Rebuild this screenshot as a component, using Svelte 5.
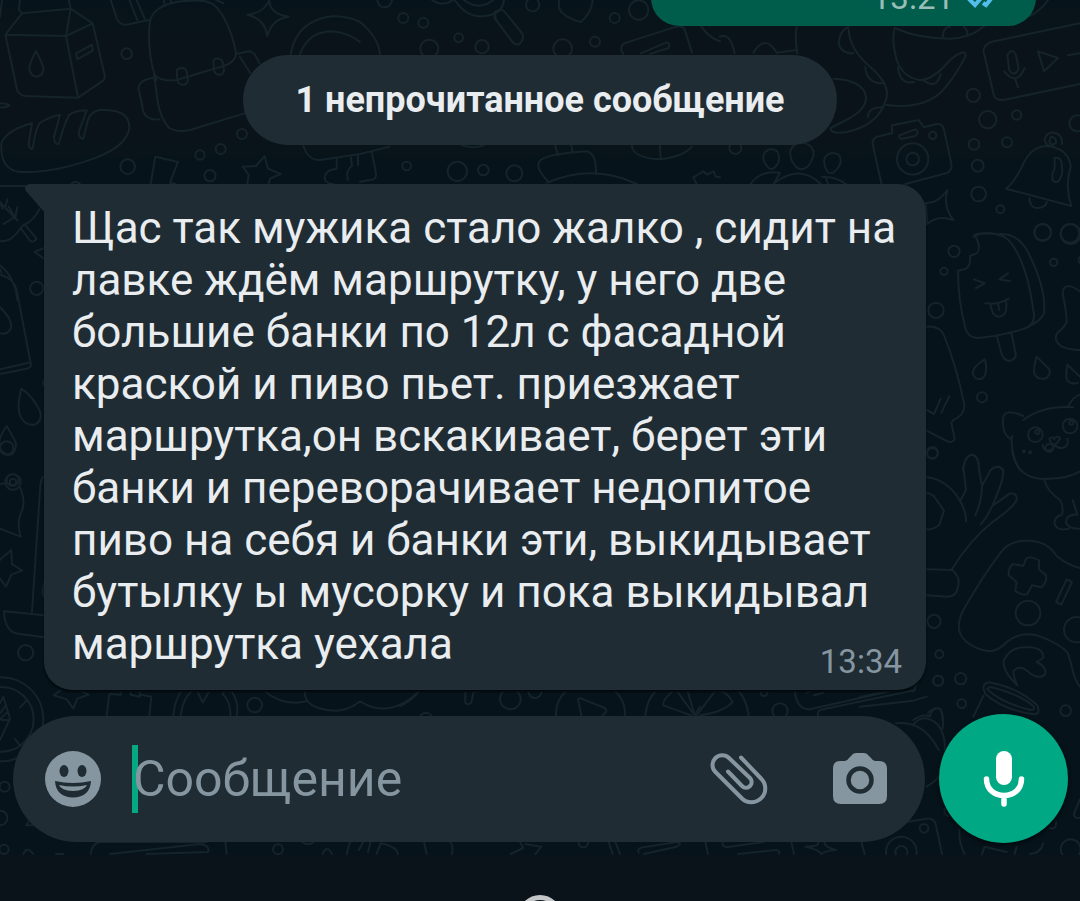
<script>
  let draft = $state('');

  const message = [
    'Щас так мужика стало жалко , сидит на',
    'лавке ждём маршрутку, у него две',
    'большие банки по 12л с фасадной',
    'краской и пиво пьет. приезжает',
    'маршрутка,он вскакивает, берет эти',
    'банки и переворачивает недопитое',
    'пиво на себя и банки эти, выкидывает',
    'бутылку ы мусорку и пока выкидывал',
    'маршрутка уехала'
  ];

  // The last line shares its row with the time stamp.
  const body = message.slice(0, -1).join('\n');
  const lastLine = message[message.length - 1];

  // Wallpaper doodles, drawn at triple size around an origin.
  // Circles are [cx, cy, r].
  const doodles = [
    {
      x: 0, y: 0,
      circles: [[380, 161, 16], [383, 500, 22], [630, 527, 17], [600, 465, 14], [662, 447, 15], [726, 402, 15]],
      paths: [
        'M0 50L6 0M60 0L56 30L66 40L212 26L206 0M66 40L16 104L198 108L212 26L278 70L198 108L234 292M16 104L52 272Q58 286 76 288L234 293L306 244Q316 238 314 226L278 70M108 154Q88 190 88 206Q92 230 110 230Q132 226 130 204Q126 186 108 154M228 160L276 134L278 152L232 178Z',
        'M332 0L350 54Q358 76 380 74L446 60M388 0L412 60M410 0L434 56M492 0L494 18M512 0L514 10',
        'M470 240C446 180 444 110 450 62C462 20 510 4 570 2C640 -4 652 22 670 50Q700 104 708 160Q708 186 670 198L530 240Q480 246 462 222L470 280Q476 350 508 384Q530 398 570 390L740 338M460 234Q414 240 416 268L430 334Q440 362 478 358M708 162L746 154Q764 154 778 190M720 170L750 218M640 -4L670 10',
        'M530 210Q534 204 546 204Q558 204 560 216L564 240Q560 256 546 254Q536 254 532 240ZM640 182Q644 174 656 176Q668 178 670 194L672 212Q668 226 656 224Q644 222 642 208Z',
        'M808 0Q808 42 866 50Q816 56 802 108Q794 56 742 44Q792 40 808 0M872 162Q890 60 1000 48Q1050 50 1080 66M900 162Q926 94 996 94Q1044 98 1080 126',
        'M0 310Q20 310 28 316Q16 324 0 322M4 430Q20 390 96 370L86 430Q88 450 98 446Q110 370 124 366Q150 350 180 344L162 410Q162 434 176 432Q190 380 206 346Q228 330 260 332L236 396Q236 416 250 416L264 360Q272 334 300 330Q390 326 388 384Q380 440 280 476Q160 520 60 516Q0 510 4 430',
        'M452 552L466 470L534 486L510 548L526 552M794 468L804 506L842 522L810 536L806 552M742 552L746 524L728 500L768 498L794 468M910 438Q926 482 960 480L1080 462M1010 478L1010 506Q974 510 974 534Q976 552 1000 552M1052 468L1056 498Q1036 510 1044 540M1074 466L1074 494',
        'M0 558L76 558M214 552Q226 538 240 552M0 606L52 662L26 620M22 598L16 622M0 610L8 626M52 622L46 650L10 672M118 628Q102 660 74 674L110 716Q100 730 90 722L62 684L72 674M62 684Q30 732 0 722M132 744L104 756L132 776M0 796Q44 830 52 900'
      ]
    },
    {
      x: 360, y: 0,
      circles: [[74, 0, 22], [130, 54, 15], [190, 68, 15], [296, 113, 13], [208, 146, 27], [366, 140, 20], [518, 14, 20], [764, 54, 15], [836, 30, 29], [608, 146, 28], [705, 125, 15], [140, 498, 13], [292, 514, 29], [370, 510, 16], [463, 520, 24]],
      paths: [
        'M0 66Q54 110 60 162M216 0Q246 22 280 0M284 0Q320 54 370 48Q426 46 432 0M312 0Q356 34 400 0M408 60L404 36Q424 20 438 40L488 102Q492 120 478 132Q464 136 456 124L402 52',
        'M598 0Q592 22 606 38Q630 58 662 66Q696 38 698 0M790 162Q776 142 792 130L930 86Q966 72 974 88L996 158M842 160L918 128Q932 126 926 144L870 162M1024 80Q1050 116 1080 124',
        'M0 462L88 440M36 458L48 520Q50 540 30 540L0 545M308 436Q340 448 370 436M586 438L594 466M634 438L638 456M566 546Q520 500 542 480Q564 462 680 454Q708 460 708 516M562 548Q700 490 830 552M816 438Q820 474 900 478Q970 470 996 440M900 438L902 478M1010 552L1000 532L1030 514L1042 524L1060 514L1068 530L1080 532'
      ]
    },
    {
      x: 720, y: 0,
      circles: [[760, 286, 20], [803, 359, 26], [890, 345, 14], [762, 433, 16], [861, 427, 15], [773, 497, 18], [776, 582, 22], [841, 628, 12], [968, 696, 25], [1050, 700, 28], [1072, 370, 24], [46, 444, 18], [578, 477, 47], [578, 477, 19], [638, 406, 11]],
      paths: [
        'M0 110Q30 96 44 160M100 158Q136 100 170 158L232 150M230 82Q224 110 232 160M386 82Q360 88 356 130Q362 160 400 160M386 90Q390 150 450 200Q520 260 494 310Q470 376 380 396Q330 404 332 384L390 354Q440 326 438 290Q430 240 340 236M436 202Q440 250 488 250M444 352Q444 320 490 322',
        'M524 84Q596 116 690 116Q750 114 790 80Q834 54 850 30M524 84Q514 120 530 180Q550 234 600 240Q640 240 690 180Q740 140 736 170Q700 240 660 280Q600 330 496 314M534 202Q540 256 582 246M612 242Q650 270 662 222M668 112Q670 80 690 80M732 80Q744 92 742 104M930 48Q964 30 984 0',
        'M1080 70L830 122Q780 130 794 168L820 280Q824 302 850 300L1080 252M862 166Q876 140 888 166L896 206Q886 232 868 212ZM852 214Q890 260 914 204M886 238L894 262M954 154L1014 174L972 214ZM1044 166L1080 160',
        'M484 550L458 432Q456 412 480 408L516 400L516 376L596 360L612 382L650 372Q668 370 672 390L694 490Q698 512 678 520L556 552M538 406L586 388Q600 396 586 408L548 416Q536 418 538 406',
        'M146 504Q124 480 132 460Q150 438 172 454Q186 486 162 504Q154 510 146 504M232 504Q206 480 212 450Q224 424 252 428Q286 440 280 468Q262 520 232 504M324 516Q308 494 314 474Q330 450 356 464Q374 490 340 518Q332 522 324 516M92 552Q120 510 180 518L162 550M162 550Q240 490 302 552M306 530Q350 530 378 552M316 530L324 552',
        'M608 608Q650 616 682 570Q668 620 700 660Q652 644 622 672L618 612M1002 440Q976 440 974 418Q980 396 1002 398Q1028 402 1026 432M858 566Q880 550 906 500Q930 440 980 438Q1046 444 1052 500Q1034 560 1054 618ZM994 410Q1010 412 1008 428Q1000 438 990 430Q986 418 994 410M1004 474Q1030 466 1026 520Q1018 556 998 542Q994 520 1004 506ZM928 594Q930 626 956 624Q980 620 980 606M760 710Q800 690 850 710'
      ]
    },
    {
      x: 860, y: 220,
      circles: [[282, 94, 17], [252, 154, 11], [228, 271, 23], [548, 38, 25], [632, 42, 30], [581, 127, 11], [668, 120, 12], [366, 532, 15], [217, 698, 17], [526, 644, 22], [630, 618, 22], [532, 636, 6], [634, 608, 6], [492, 694, 3], [510, 697, 3]],
      paths: [
        'M344 44Q366 86 350 100L330 108Q334 140 314 148L294 152Q294 240 316 324Q324 352 350 354Q420 350 492 326Q530 316 520 270Q500 130 454 70Q430 36 380 40Q356 40 344 44M420 42Q476 40 506 100Q560 210 552 280Q542 304 500 322M342 178L374 190L348 204M444 160L418 178L450 184M376 250Q410 256 446 236M392 254Q396 292 420 290Q444 284 438 244M414 250L418 270M410 346L424 400Q432 424 452 422Q472 414 466 396L454 338',
        'M374 418Q338 440 338 460Q344 482 366 476Q384 464 376 422M530 410Q518 450 524 464Q536 482 560 474Q574 460 568 448ZM622 434Q616 470 622 482Q636 496 654 488M622 434L660 470M660 214Q610 180 608 220Q620 280 620 306Q610 326 594 336Q576 360 606 380Q630 390 660 390',
        'M200 320Q240 318 252 346Q290 440 312 550Q318 584 280 600L274 608L284 656Q280 670 262 664L200 632M200 570L222 582L242 536M268 528L244 578M490 600Q550 556 640 562M626 556Q640 530 660 524M490 588Q440 564 430 590Q424 640 450 656M456 648Q450 700 480 750M568 656Q580 646 582 658Q594 644 600 656Q592 670 584 674Q570 670 568 656M584 674Q578 692 562 692Q550 690 548 674M584 674Q592 686 606 684Q628 680 622 656M308 750Q316 704 338 704Q356 712 358 750M392 750Q412 730 430 750'
      ]
    },
    {
      x: 860, y: 450,
      circles: [[217, 10, 16], [222, 514, 20], [504, 489, 37], [650, 539, 38], [238, 613, 12], [235, 692, 15], [302, 686, 17], [305, 761, 13], [617, 782, 16], [568, -6, 12]],
      paths: [
        'M456 0Q470 94 570 86Q630 84 660 64M552 86Q560 124 600 150Q612 170 606 194Q580 200 584 224Q594 244 626 236M638 150L652 194Q620 192 618 216Q624 238 660 236',
        'M200 82Q250 86 290 136Q320 180 318 214M302 150L318 120L310 52Q318 12 340 14Q358 22 356 54L366 108Q366 150 346 196M366 108L392 60Q420 38 430 66Q430 90 404 150Q390 190 362 224M402 164L450 130Q476 130 468 154Q450 180 400 214Q330 270 274 360M200 128L220 136L252 182L238 224Q222 240 200 238M200 358L276 360Q302 380 294 410Q290 440 264 440L200 436',
        'M660 354Q620 344 590 318Q560 270 500 272Q450 270 420 310Q360 390 308 484Q280 544 320 576Q350 600 390 604Q420 600 440 576Q480 544 530 556Q600 580 624 610Q634 640 640 670Q650 700 660 710M498 326Q510 316 538 332L536 358L558 376Q562 396 544 412L516 406L502 432Q486 438 466 422L470 396L446 376Q444 356 458 342L490 348ZM620 388L636 396L604 464L588 456Z',
        'M472 706Q424 660 432 630Q450 590 500 592Q550 590 550 624L530 636Q560 650 556 672Q540 690 510 670Q480 640 460 664Q460 680 472 706M370 714Q370 696 394 698Q480 716 532 766Q544 796 518 792Q430 780 376 732ZM382 718Q386 708 404 714Q480 734 522 770Q526 784 504 778Q420 756 382 718M370 738L340 800M200 740L160 752L0 770M0 742L160 704Q170 710 160 724M160 810Q190 790 210 800Q216 770 240 776Q250 790 248 810'
      ]
    },
    {
      x: 0, y: 180,
      circles: [[110, 325, 20], [38, 900, 18]],
      paths: ['M0 268Q6 276 4 286Q40 294 50 330L92 550Q96 562 80 566L0 582M0 568L86 548M0 382Q40 420 32 446Q20 466 0 460M64 626Q50 680 60 706Q74 738 104 734Q128 724 120 694Q100 650 64 626M20 738Q-10 780 0 806Q16 830 38 822Q54 800 44 780ZM132 600Q126 608 132 618']
    },
    {
      x: 0, y: 450,
      circles: [[20, -6, 20], [39, 96, 23], [39, 96, 10], [77, 608, 23]],
      paths: ['M0 102L20 100M60 112Q80 160 62 190Q50 220 62 260L0 236M34 300L36 342L66 362L34 374L18 410L0 386M0 330L10 320L34 300M132 78Q120 90 120 120L96 486M132 400Q124 430 132 440M12 484L132 496M12 484Q14 550 60 552L132 562']
    },
    {
      x: 0, y: 670,
      circles: [[4, 148, 97], [4, 148, 126], [764, 105, 22], [14, 350, 15], [834, 538, 15], [0, 444, 22], [12, 538, 14]],
      paths: [
        'M0 100L10 80L30 146L0 210M0 130L16 108M0 148L24 124M6 150L28 150M60 112L80 92M44 206L60 226M182 60L162 76L200 88L220 116L232 86L266 74L236 60M320 136L328 72L362 74L362 60M392 60L392 74L420 80L420 60M424 74L454 80L448 136M520 136Q524 90 546 60M542 136Q550 80 580 60M592 64L608 98L626 66M692 136Q690 90 668 72Q674 56 696 66Q718 100 710 136M792 62Q850 110 920 94M914 60Q910 120 1010 122Q1050 120 1080 94Q1170 150 1258 62',
        'M90 450L78 466L100 466M70 552Q80 526 100 552M272 552Q276 520 300 516L620 516M330 552L600 522Q630 526 624 546L440 552M676 516L680 552M968 552Q980 522 996 552M1040 552L1050 516M1076 540L1090 516M1104 546L1112 516M1130 552L1142 520Q1190 530 1194 552M906 516Q926 530 940 516M168 552L190 552'
      ]
    },
    {
      x: 400, y: 670,
      circles: [[331, 87, 31], [405, 64, 20], [550, 518, 14]],
      paths: ['M0 108Q40 90 60 60M196 62L196 98Q204 108 214 98L220 68L246 60M62 136Q78 120 94 136M468 136Q466 90 502 60M642 60Q680 96 674 136M534 88Q540 82 550 88L614 114Q626 124 608 136M534 88L544 136M736 136Q740 90 770 60M874 136L790 106Q786 90 820 62M830 62L884 136L862 60M884 136L900 110M72 516L80 552M152 516Q160 530 156 552M332 552L370 534L360 516M376 522L424 530L406 552M626 516L638 552M646 516L660 552M716 548Q710 534 730 532L830 516Q850 520 830 530L732 552']
    },
    {
      x: 690, y: 670,
      circles: [[744, 32, 15], [270, 123, 23], [222, 68, 10], [702, 475, 13], [634, 546, 46], [634, 546, 18], [1142, 538, 30]],
      paths: [
        'M20 136L76 62Q110 60 128 96Q100 126 30 136M144 60Q170 90 176 136M314 62Q320 120 360 118L680 46M384 136Q380 120 400 118L676 60M372 76L400 68M350 68L366 62M618 160Q700 150 746 240M670 164Q700 126 744 164Q768 200 764 240M714 130Q730 110 750 116Q762 140 758 176M710 350Q760 320 752 290M764 416Q760 434 776 438',
        'M46 516L54 552M98 516Q94 534 120 530L220 516M144 552L260 540Q272 544 266 552M304 516L312 552M384 516Q390 530 346 530Q390 540 394 552Q406 542 438 540Q400 530 404 516M514 516L524 552M650 456L710 446Q734 444 738 466L756 552M808 478Q806 520 824 552M876 552L884 530L950 546M974 552L980 530M1060 520Q1050 552 1020 552M1080 474Q1100 480 1098 456M1170 388L1152 430Q1150 446 1170 444'
      ]
    }
  ];
</script>

<div class="screen">
  <main class="chat">
    <svg class="wallpaper" width="1080" height="855" viewBox="0 0 1080 855" aria-hidden="true">
      {#each doodles as group}
        <g transform="translate({group.x} {group.y}) scale(0.33333)">
          {#each group.circles as [cx, cy, r]}
            <circle {cx} {cy} {r} />
          {/each}
          {#each group.paths as d}
            <path {d} />
          {/each}
        </g>
      {/each}
    </svg>

    <section class="history">
      <article class="bubble sent">
        <time>13:21</time>
        <svg class="ticks" width="34" height="22" viewBox="0 0 34 22" aria-hidden="true">
          <path d="M1 10L9 18L23 2M17 16L20 18L33 2" />
        </svg>
      </article>

      <div class="unread">1 непрочитанное сообщение</div>

      <article class="bubble received">
        <svg class="tail" width="20" height="30" viewBox="0 0 20 30" aria-hidden="true">
          <path d="M20 0H4Q-2 2 1 7L20 29Z" />
        </svg>
        <p>{body}</p>
        <div class="ending">
          <p>{lastLine}</p>
          <time>13:34</time>
        </div>
      </article>
    </section>

    <form class="composer" onsubmit={(e) => e.preventDefault()}>
      <div class="field">
        <button type="button" class="icon" aria-label="Эмодзи">
          <svg width="56" height="56" viewBox="0 0 56 56">
            <circle cx="28" cy="28" r="28" fill="#8696a0" />
            <ellipse cx="19" cy="20" rx="4.5" ry="6" fill="#1f2c34" />
            <ellipse cx="37" cy="20" rx="4.5" ry="6" fill="#1f2c34" />
            <path d="M10 30Q28 34 46 30Q45 46 28 46.500Q11 46 10 30Z" fill="#1f2c34" />
            <path d="M14 34Q28 37 42 34Q40 39.500 28 40Q16 39.500 14 34Z" fill="#8696a0" />
          </svg>
        </button>
        <div class="entry">
          <span class="caret"></span>
          <input type="text" placeholder="Сообщение" aria-label="Сообщение" bind:value={draft} />
        </div>
        <button type="button" class="icon" aria-label="Прикрепить">
          <svg width="60" height="56" viewBox="0 0 60 56" fill="none" stroke="#8696a0" stroke-width="4" stroke-linecap="round" stroke-linejoin="round">
            <path d="M33 6.500L53 27.500A13.700 13.700 0 0 1 34 47.500L7.500 21A9.500 9.500 0 0 1 21 7L42 27A5.500 5.500 0 0 1 34 35L20 20.500" />
          </svg>
        </button>
        <button type="button" class="icon" aria-label="Камера">
          <svg width="56" height="52" viewBox="0 0 56 52">
            <path d="M8 8H13Q15 8 17 5L19 3Q21 0 24 0H32Q35 0 37 3L39 5Q41 8 43 8H47Q55 8 55 16V43Q55 51 47 51H9Q1 51 1 43V16Q1 8 8 8Z" fill="#8696a0" />
            <circle cx="28" cy="27" r="11.500" fill="none" stroke="#1f2c34" stroke-width="4.500" />
          </svg>
        </button>
      </div>
      <button type="button" class="mic" aria-label="Голосовое сообщение">
        <svg width="42" height="58" viewBox="0 0 42 58">
          <rect x="13" y="1" width="16" height="34" rx="8" fill="#fff" />
          <path d="M3.500 29C3.500 51 38.500 51 38.500 29M21 46V54" fill="none" stroke="#fff" stroke-width="5.500" stroke-linecap="round" />
        </svg>
      </button>
    </form>
  </main>

  <nav class="system">
    <button type="button" class="home" aria-label="Домой"></button>
  </nav>
</div>

<style>
  :global(body) {
    margin: 0;
    background: #0b141a;
  }

  .screen {
    display: flex;
    flex-direction: column;
    height: 100vh;
    overflow: hidden;
    font-family: Roboto, 'Noto Sans', sans-serif;
    color: #e9edef;
  }

  .chat {
    position: relative;
    isolation: isolate;
    flex: 1;
    display: flex;
    flex-direction: column;
    min-height: 0;
    overflow: hidden;
    background: linear-gradient(#07131a, #0b131a 50px, #0b131a 130px, #06131a 170px, #06131a);
  }

  .wallpaper {
    position: absolute;
    inset: 0;
    z-index: -1;
    fill: none;
    stroke: #15232a;
    stroke-width: 6;
    stroke-linecap: round;
    stroke-linejoin: round;
  }

  .history {
    flex: 1;
    min-height: 0;
    display: flex;
    flex-direction: column;
    justify-content: flex-end;
    padding-bottom: 24px;
  }

  .history > * {
    flex: none;
  }

  .bubble {
    border-radius: 28px;
  }

  time {
    font-size: 33px;
    line-height: 40px;
    color: #8696a0;
  }

  .sent {
    display: flex;
    justify-content: flex-end;
    align-items: center;
    gap: 12px;
    align-self: flex-end;
    box-sizing: border-box;
    width: 385px;
    margin-right: 44px;
    padding: 40px 36px 8px 0;
    background: #005c4b;
  }

  .sent time {
    color: #99beb7;
  }

  .ticks {
    fill: none;
    stroke: #53bdeb;
    stroke-width: 4;
  }

  .unread {
    align-self: center;
    margin: 29px 0 39px;
    padding: 0 52px;
    border-radius: 45px;
    background: #1f2c34;
    font-size: 36px;
    font-weight: 700;
    line-height: 90px;
  }

  .received {
    position: relative;
    margin: 0 154px 0 44px;
    padding: 18px 24px 8px 28px;
    border-top-left-radius: 0;
    background: #1f2c34;
    box-shadow: 0 2px 2px #02090c;
  }

  .received p {
    margin: 0;
    font-size: 44px;
    line-height: 52px;
    white-space: pre;
  }

  .ending {
    display: flex;
    justify-content: space-between;
  }

  .ending time {
    margin-top: 24px;
  }

  .tail {
    position: absolute;
    top: 0;
    left: -19px;
    fill: #1f2c34;
  }

  .composer {
    flex: none;
    display: flex;
    align-items: center;
    gap: 14px;
    padding: 0 12px 12px 13px;
  }

  .field {
    flex: 1;
    min-width: 0;
    height: 126px;
    box-sizing: border-box;
    display: flex;
    align-items: center;
    gap: 64px;
    padding: 0 37px 0 32px;
    border-radius: 63px;
    background: #1f2c34;
  }

  button {
    flex: none;
    padding: 0;
    border: 0;
    background: none;
  }

  .icon svg,
  .mic svg {
    display: block;
  }

  .entry {
    position: relative;
    flex: 1;
    min-width: 0;
    margin-left: -32px;
  }

  .caret {
    position: absolute;
    top: -2px;
    left: -1px;
    width: 6px;
    height: 68px;
    background: #06a884;
  }

  input {
    position: relative;
    display: block;
    width: 100%;
    height: 64px;
    padding: 0;
    border: 0;
    outline: 0;
    background: none;
    color: #e9edef;
    font: 50px Roboto, 'Noto Sans', sans-serif;
  }

  input::placeholder {
    color: #8696a0;
    opacity: 1;
  }

  .mic {
    display: grid;
    place-items: center;
    width: 129px;
    height: 129px;
    border-radius: 50%;
    background: #00a884;
    box-shadow: 0 2px 4px #02090c;
  }

  .system {
    flex: none;
    display: flex;
    justify-content: center;
    box-sizing: border-box;
    height: 46px;
    padding-top: 40px;
    overflow: hidden;
    background: #0b131a;
  }

  .home {
    box-sizing: border-box;
    width: 44px;
    height: 44px;
    border: 5px solid #c4c6c8;
    border-radius: 50%;
  }
</style>
